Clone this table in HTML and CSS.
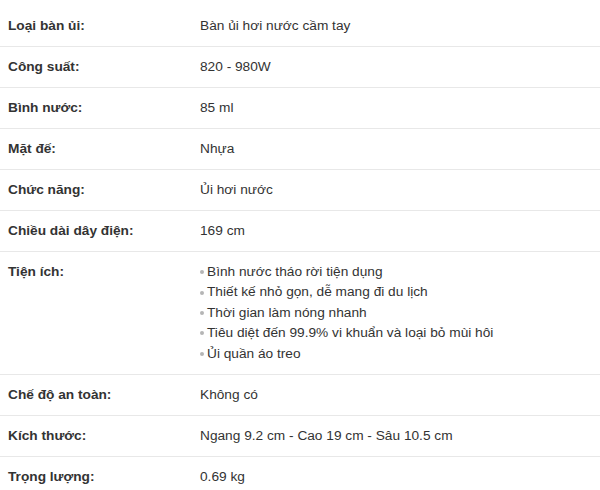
FILE: index.html
```html
<!DOCTYPE html>
<html lang="vi">
<head>
<meta charset="utf-8">
<link rel="stylesheet" href="styles.css">
</head>
<body>
<div class="specs">
  <div class="row"><div class="label">Loại bàn ủi:</div><div class="value">Bàn ủi hơi nước cầm tay</div></div>
  <div class="row"><div class="label">Công suất:</div><div class="value">820 - 980W</div></div>
  <div class="row"><div class="label">Bình nước:</div><div class="value">85 ml</div></div>
  <div class="row"><div class="label">Mặt đế:</div><div class="value">Nhựa</div></div>
  <div class="row"><div class="label">Chức năng:</div><div class="value">Ủi hơi nước</div></div>
  <div class="row"><div class="label">Chiều dài dây điện:</div><div class="value">169 cm</div></div>
  <div class="row"><div class="label">Tiện ích:</div>
    <ul class="value list">
      <li>Bình nước tháo rời tiện dụng</li>
      <li>Thiết kế nhỏ gọn, dễ mang đi du lịch</li>
      <li>Thời gian làm nóng nhanh</li>
      <li>Tiêu diệt đến 99.9% vi khuẩn và loại bỏ mùi hôi</li>
      <li>Ủi quần áo treo</li>
    </ul>
  </div>
  <div class="row"><div class="label">Chế độ an toàn:</div><div class="value">Không có</div></div>
  <div class="row"><div class="label">Kích thước:</div><div class="value">Ngang 9.2 cm - Cao 19 cm - Sâu 10.5 cm</div></div>
  <div class="row last"><div class="label">Trọng lượng:</div><div class="value">0.69 kg</div></div>
</div>
</body>
</html>
```

FILE: styles.css
```css
html, body {
  margin: 0;
  padding: 0;
  background: #fff;
}
body {
  font-family: "Liberation Sans", Arial, sans-serif;
  font-size: 13.7px;
  color: #333;
}
.specs {
  padding-top: 6px;
}
.row {
  display: grid;
  grid-template-columns: 192px 1fr;
  padding: 10px 0 10px 8px;
  line-height: 20px;
  border-bottom: 1px solid #e8e8e8;
}
.row.last {
  border-bottom: none;
}
.label {
  font-weight: bold;
  color: #333;
}
.value {
  color: #333;
}
.list {
  list-style: none;
  margin: 0;
  padding: 0;
  line-height: 20.4px;
}
.list li {
  display: flex;
  align-items: center;
}
.list li::before {
  content: "";
  width: 4px;
  height: 4px;
  border-radius: 50%;
  background: #b5b5b5;
  margin: 0 3px 0 0;
  flex: none;
}
```
